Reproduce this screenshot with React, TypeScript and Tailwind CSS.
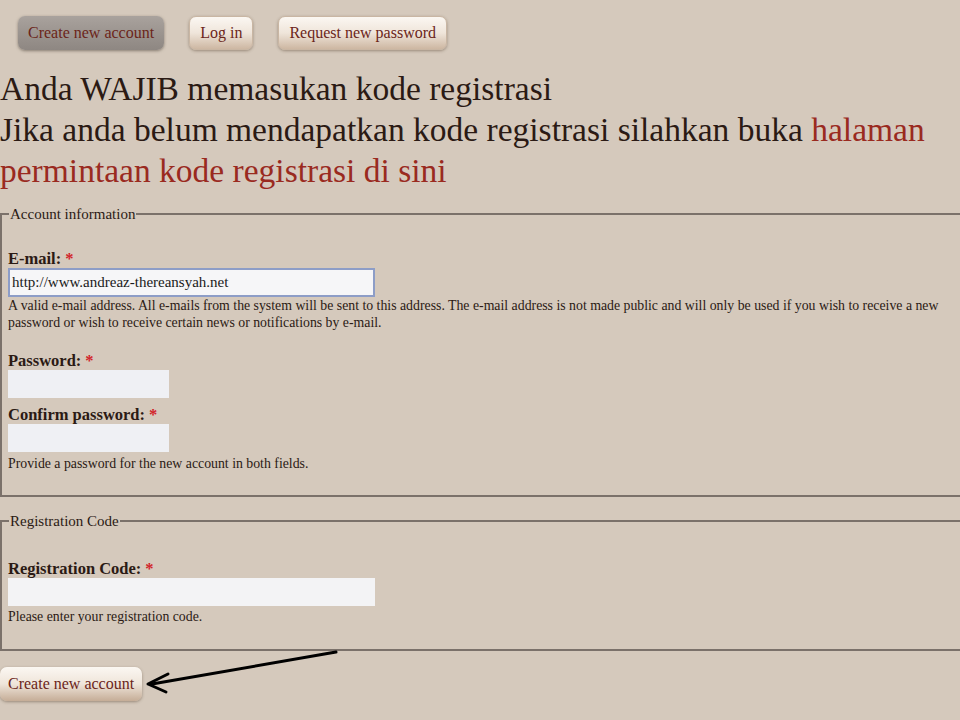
import React from "react";

const navBtn =
  "h-[34px] px-[10px] rounded-[7px] border border-[#c9b6a3] text-[16px] text-[#6b2519] shadow-[0_1px_3px_rgba(80,60,40,0.45)] bg-gradient-to-b from-[#fbf7f2] via-[#efe5da] to-[#cdb7a2]";

function Req() {
  return <span className="text-[#d2232a] ml-[4px]">*</span>;
}

export default function App() {
  return (
    <div
      className="relative w-[960px] h-[720px] overflow-hidden bg-[#d5c9bc] text-[#2b1a14]"
      style={{ fontFamily: '"Liberation Serif", serif' }}
    >
      {/* tabs */}
      <div className="flex items-center pt-[16px] pl-[18px] gap-[25px]">
        <button className="h-[34px] px-[10px] rounded-[7px] text-[16px] text-[#6b2519] bg-gradient-to-b from-[#a9a29d] to-[#8e8782] shadow-[0_1px_3px_rgba(60,50,40,0.5)]">
          Create new account
        </button>
        <button className={navBtn}>Log in</button>
        <button className={navBtn}>Request new password</button>
      </div>

      {/* heading */}
      <div className="mt-[18px] text-[33.5px] leading-[41px] text-[#2b1a14]">
        <div>Anda WAJIB memasukan kode registrasi</div>
        <div>
          Jika anda belum mendapatkan kode registrasi silahkan buka{" "}
          <a className="text-[#9a2a1f]">
            halaman
            <br />
            permintaan kode registrasi di sini
          </a>
        </div>
      </div>

      {/* account information */}
      <fieldset className="mt-[12px] w-[975px] border-2 border-[#7b716a] pl-[6px] pb-[23px]">
        <legend className="text-[15px] px-[1px] ml-[1px]">Account information</legend>
        <div className="mt-[24px]">
          <label className="block text-[16.5px] font-bold leading-[18px]">
            E-mail:<Req />
          </label>
          <input
            defaultValue="http://www.andreaz-thereansyah.net"
            className="block w-[367px] h-[29px] px-[2px] bg-[#f6f6f8] border-2 border-[#8d9dc7] text-[15px] text-[#1a1a1a] outline-none"
          />
          <p className="w-[948px] text-[13.8px] leading-[17px]">
            A valid e-mail address. All e-mails from the system will be sent to this address. The e-mail address is not made public and will only be used if you wish to receive a new password or wish to receive certain news or notifications by e-mail.
          </p>
        </div>
        <div className="mt-[21px]">
          <label className="block text-[16.5px] font-bold leading-[18px]">
            Password:<Req />
          </label>
          <input type="password" className="block w-[161px] h-[28px] bg-[#eff0f4] outline-none" />
        </div>
        <div className="mt-[8px]">
          <label className="block text-[16.5px] font-bold leading-[18px]">
            Confirm password:<Req />
          </label>
          <input type="password" className="block w-[161px] h-[28px] bg-[#eff0f4] outline-none" />
          <p className="mt-[3px] text-[13.8px] leading-[17px]">Provide a password for the new account in both fields.</p>
        </div>
      </fieldset>

      {/* registration code */}
      <fieldset className="mt-[13px] w-[975px] border-2 border-[#7b716a] pl-[6px] pb-[24px]">
        <legend className="text-[15px] px-[1px] ml-[1px]">Registration Code</legend>
        <div className="mt-[28px]">
          <label className="block text-[16.5px] font-bold leading-[18px]">
            Registration Code:<Req />
          </label>
          <input className="block w-[367px] h-[28px] bg-[#f3f3f5] outline-none" />
          <p className="mt-[2px] text-[13.8px] leading-[17px]">Please enter your registration code.</p>
        </div>
      </fieldset>

      <div className="mt-[16px]">
        <button className="h-[34px] px-[8px] rounded-[7px] text-[16px] text-[#6b2519] bg-gradient-to-b from-[#fbf7f2] via-[#efe5da] to-[#c5ad97] shadow-[0_1px_3px_rgba(80,60,40,0.45)]">
          Create new account
        </button>
      </div>

      {/* annotation arrow */}
      <svg className="absolute left-0 top-0 pointer-events-none" width="960" height="720">
        <line x1="336" y1="652" x2="152" y2="684" stroke="#000" strokeWidth="3" strokeLinecap="round" />
        <path d="M168 674 L148 684 L166 692" fill="none" stroke="#000" strokeWidth="3" strokeLinecap="round" strokeLinejoin="round" />
      </svg>
    </div>
  );
}
